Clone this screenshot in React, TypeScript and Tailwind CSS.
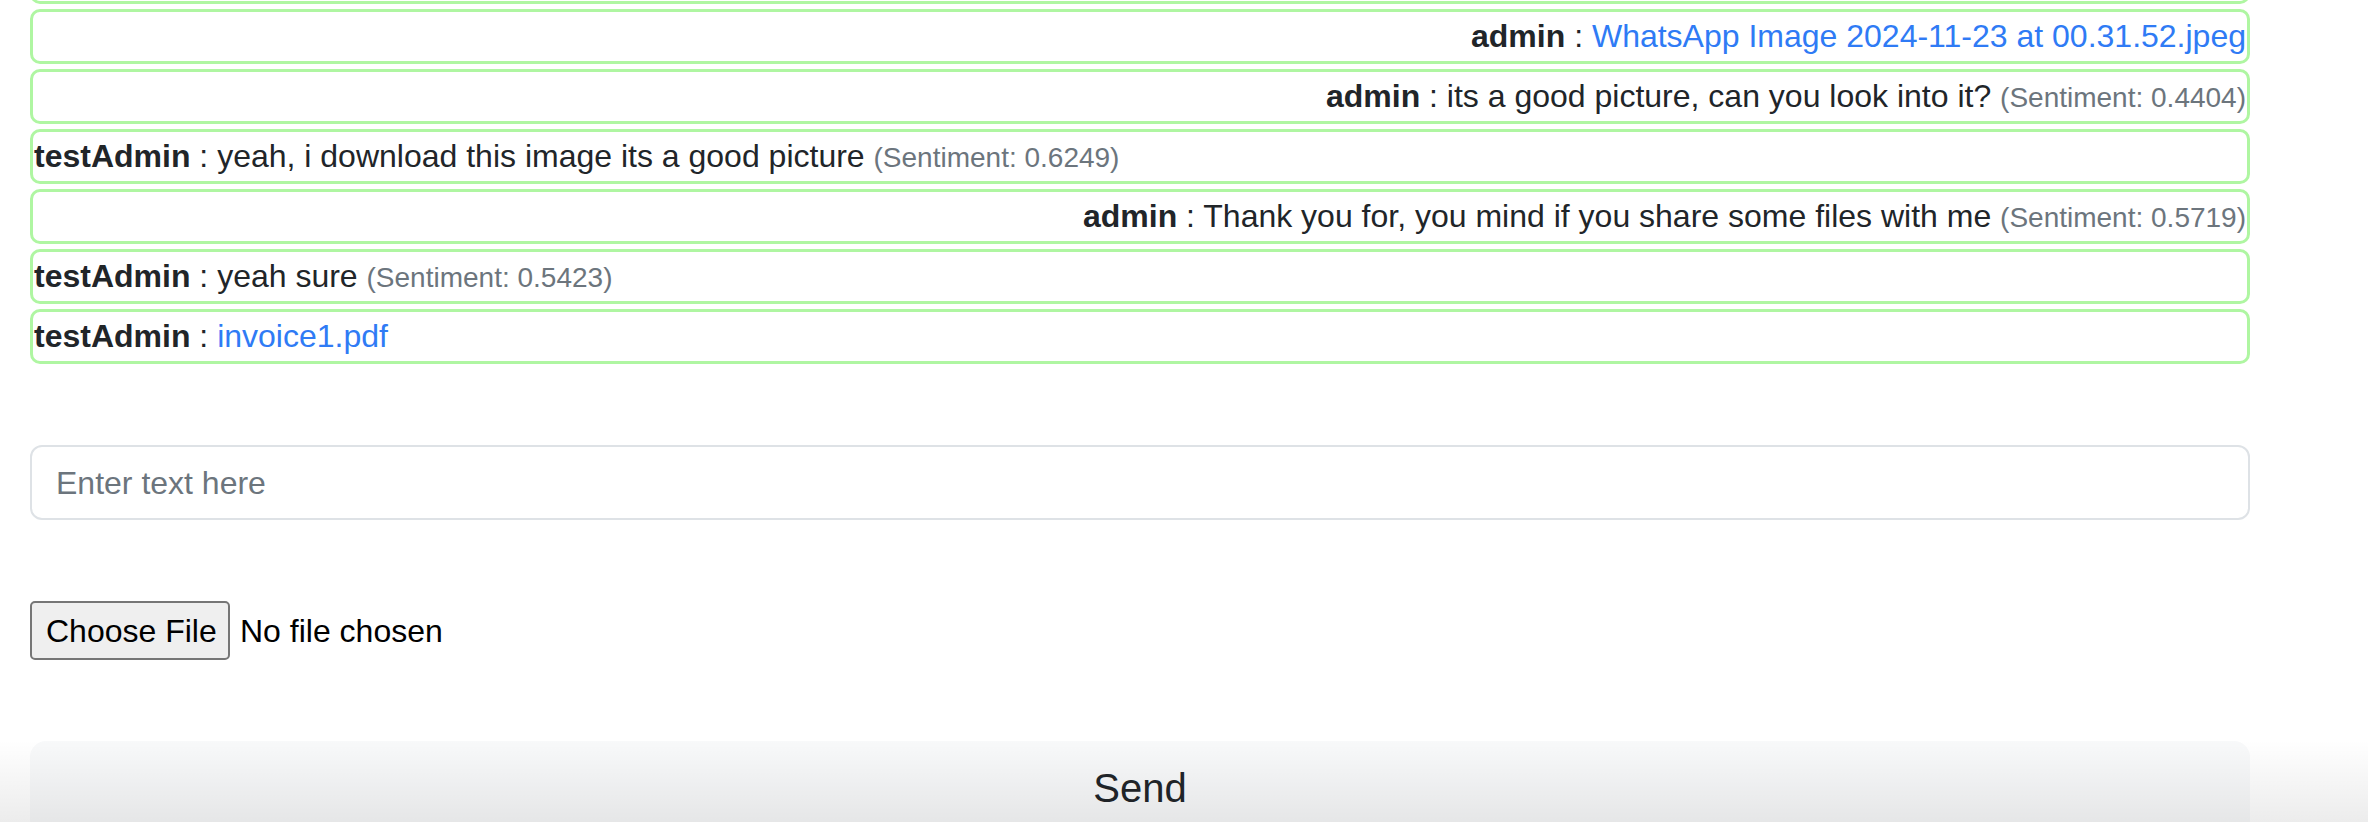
import React from "react";

type Row = {
  user: string;
  right: boolean;
  text?: string;
  link?: string;
  sentiment?: string;
};

const rows: Row[] = [
  { user: "", right: true },
  { user: "admin", right: true, link: "WhatsApp Image 2024-11-23 at 00.31.52.jpeg" },
  { user: "admin", right: true, text: "its a good picture, can you look into it?", sentiment: "0.4404" },
  { user: "testAdmin", right: false, text: "yeah, i download this image its a good picture", sentiment: "0.6249" },
  { user: "admin", right: true, text: "Thank you for, you mind if you share some files with me", sentiment: "0.5719" },
  { user: "testAdmin", right: false, text: "yeah sure", sentiment: "0.5423" },
  { user: "testAdmin", right: false, link: "invoice1.pdf" },
];

function ChatRow({ row }: { row: Row }) {
  return (
    <div
      className={`h-[55px] rounded-[10px] border-[3px] border-[#aff6a2] px-[1px] leading-[49px] whitespace-nowrap ${
        row.right ? "text-right" : "text-left"
      }`}
    >
      {row.user && (
        <>
          <b className="font-bold">{row.user}</b>
          {" : "}
          {row.link ? (
            <a className="text-[#2f7bf5]">{row.link}</a>
          ) : (
            <span>{row.text}</span>
          )}
          {row.sentiment && (
            <>
              {" "}
              <small className="text-[28px] text-[#6c757d]">(Sentiment: {row.sentiment})</small>
            </>
          )}
        </>
      )}
    </div>
  );
}

export default function App() {
  return (
    <div className="relative h-[822px] overflow-hidden bg-white text-[32px] text-[#212529] font-['Liberation_Sans',Arial,sans-serif]">
      <div className="ml-[30px] w-[2220px] mt-[-51px]">
        <div className="flex flex-col gap-[5px]">
          {rows.map((r, i) => (
            <ChatRow key={i} row={r} />
          ))}
        </div>

        <div className="mt-[81px] flex h-[75px] items-center rounded-[12px] border-2 border-[#dee2e6] px-[24px]">
          <span className="text-[#6c757d]">Enter text here</span>
        </div>

        <div className="mt-[81px] flex h-[59px] items-center">
          <div className="flex h-[59px] w-[200px] items-center rounded-[5px] border-2 border-[#767676] bg-[#efefef] pl-[14px] text-black">
            Choose File
          </div>
          <span className="ml-[10px] text-black">No file chosen</span>
        </div>

        <div className="mt-[81px] flex h-[94px] items-center justify-center rounded-[16px] bg-[#f8f9fa] text-[40px]">
          Send
        </div>
      </div>

      <div className="pointer-events-none absolute bottom-0 left-0 right-0 h-[82px] bg-gradient-to-b from-transparent to-black/[0.075]" />
    </div>
  );
}
